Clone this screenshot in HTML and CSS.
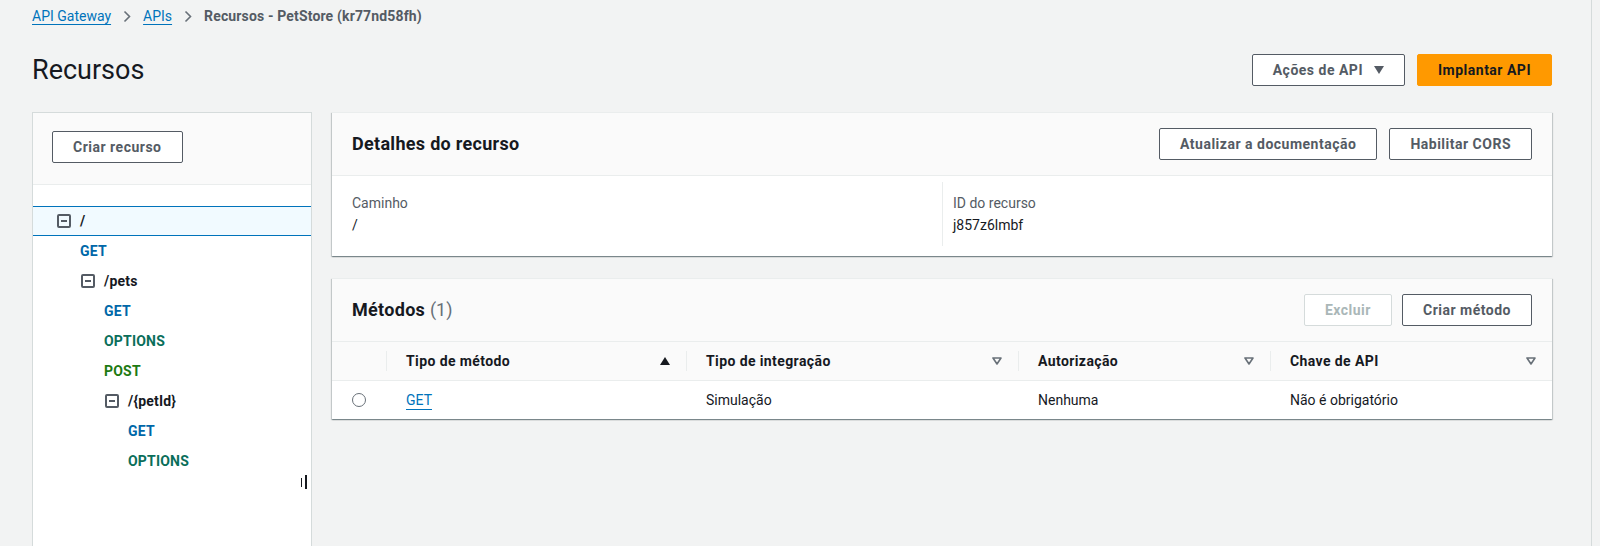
FILE: index.html
```html
<!DOCTYPE html>
<html lang="pt-BR">
<head>
<meta charset="utf-8">
<title>Recursos - PetStore</title>
<link rel="stylesheet" href="styles.css">
</head>
<body>
<div class="page">
  <nav class="crumbs">
    <a class="crumb-link" href="#">API Gateway</a>
    <svg class="chev" width="8" height="13" viewBox="0 0 8 13"><path d="M1.5 1.5 L6.5 6.5 L1.5 11.5" fill="none" stroke="#687078" stroke-width="1.6"/></svg>
    <a class="crumb-link" href="#">APIs</a>
    <svg class="chev" width="8" height="13" viewBox="0 0 8 13"><path d="M1.5 1.5 L6.5 6.5 L1.5 11.5" fill="none" stroke="#687078" stroke-width="1.6"/></svg>
    <span class="crumb-current">Recursos - PetStore (kr77nd58fh)</span>
  </nav>

  <header class="pagehead">
    <h1>Recursos</h1>
    <div class="actions">
      <button class="btn">Ações de API
        <svg width="10" height="8" viewBox="0 0 10 8"><polygon points="0,0 10,0 5,8" fill="#545b64"/></svg>
      </button>
      <button class="btn btn-primary">Implantar API</button>
    </div>
  </header>

  <div class="main">
    <aside class="tree-panel">
      <div class="tree-head">
        <button class="btn">Criar recurso</button>
      </div>
      <ul class="tree">
        <li class="row res d0 sel">
          <svg class="minus" width="14" height="14" viewBox="0 0 14 14"><rect x="1" y="1" width="12" height="12" rx="1" fill="none" stroke="#545b64" stroke-width="2"/><line x1="4" y1="7" x2="10" y2="7" stroke="#545b64" stroke-width="2"/></svg>
          <span>/</span>
        </li>
        <li class="row m0 get">GET</li>
        <li class="row res d1">
          <svg class="minus" width="14" height="14" viewBox="0 0 14 14"><rect x="1" y="1" width="12" height="12" rx="1" fill="none" stroke="#545b64" stroke-width="2"/><line x1="4" y1="7" x2="10" y2="7" stroke="#545b64" stroke-width="2"/></svg>
          <span>/pets</span>
        </li>
        <li class="row m1 get">GET</li>
        <li class="row m1 options">OPTIONS</li>
        <li class="row m1 post">POST</li>
        <li class="row res d2">
          <svg class="minus" width="14" height="14" viewBox="0 0 14 14"><rect x="1" y="1" width="12" height="12" rx="1" fill="none" stroke="#545b64" stroke-width="2"/><line x1="4" y1="7" x2="10" y2="7" stroke="#545b64" stroke-width="2"/></svg>
          <span>/{petId}</span>
        </li>
        <li class="row m2 get">GET</li>
        <li class="row m2 options">OPTIONS</li>
      </ul>
      <div class="grip"><span class="g1"></span><span class="g2"></span></div>
    </aside>

    <div class="content">
      <section class="panel">
        <div class="panel-head">
          <h2>Detalhes do recurso</h2>
          <div class="actions">
            <button class="btn">Atualizar a documentação</button>
            <button class="btn">Habilitar CORS</button>
          </div>
        </div>
        <div class="panel-body">
          <div class="cols">
            <div class="col">
              <div class="label">Caminho</div>
              <div class="value">/</div>
            </div>
            <div class="col col-right">
              <div class="label">ID do recurso</div>
              <div class="value">j857z6lmbf</div>
            </div>
          </div>
        </div>
      </section>

      <section class="panel">
        <div class="panel-head">
          <h2>Métodos <span class="count">(1)</span></h2>
          <div class="actions actions-tight">
            <button class="btn btn-disabled">Excluir</button>
            <button class="btn">Criar método</button>
          </div>
        </div>
        <table class="methods">
          <colgroup>
            <col class="c0"><col class="c1"><col class="c2"><col class="c3"><col>
          </colgroup>
          <thead>
            <tr>
              <th></th>
              <th><div class="th-in"><span>Tipo de método</span><svg width="10" height="8" viewBox="0 0 10 8"><polygon points="0,8 10,8 5,0" fill="#16191f"/></svg></div></th>
              <th><div class="th-in"><span>Tipo de integração</span><svg width="10" height="8" viewBox="0 0 10 8"><polygon points="1,1 9,1 5,7" fill="none" stroke="#687078" stroke-width="1.6" stroke-linejoin="round"/></svg></div></th>
              <th><div class="th-in"><span>Autorização</span><svg width="10" height="8" viewBox="0 0 10 8"><polygon points="1,1 9,1 5,7" fill="none" stroke="#687078" stroke-width="1.6" stroke-linejoin="round"/></svg></div></th>
              <th><div class="th-in"><span>Chave de API</span><svg width="10" height="8" viewBox="0 0 10 8"><polygon points="1,1 9,1 5,7" fill="none" stroke="#687078" stroke-width="1.6" stroke-linejoin="round"/></svg></div></th>
            </tr>
          </thead>
          <tbody>
            <tr>
              <td class="radio-cell"><span class="radio"></span></td>
              <td><a class="link" href="#">GET</a></td>
              <td>Simulação</td>
              <td>Nenhuma</td>
              <td>Não é obrigatório</td>
            </tr>
          </tbody>
        </table>
      </section>
    </div>
  </div>
</div>
</body>
</html>
```

FILE: styles.css
```css
* { box-sizing: border-box; }

html, body {
  margin: 0;
  height: 100%;
}

body {
  background: #f2f3f3;
  font-family: Roboto, "Noto Sans", "Liberation Sans", sans-serif;
  font-size: 14px;
  color: #16191f;
  overflow: hidden;
}

.page {
  width: 1592px;
  height: 546px;
  border-right: 1px solid #d5dbdb;
  padding: 6px 39px 0 32px;
}

/* breadcrumbs */
.crumbs {
  display: flex;
  align-items: center;
  gap: 12px;
  height: 20px;
  line-height: 20px;
}

.crumb-link {
  color: #0073bb;
  text-decoration: underline;
  text-underline-offset: 3px;
  text-decoration-thickness: 1px;
}

.chev { display: block; }

.crumb-current {
  color: #545b64;
  font-weight: 700;
  letter-spacing: 0.15px;
}

/* page header */
.pagehead {
  display: flex;
  justify-content: space-between;
  align-items: center;
  height: 40px;
  margin-top: 24px;
}

h1 {
  margin: 0;
  font-size: 27px;
  font-weight: 400;
  line-height: 36px;
}

.actions {
  display: flex;
  align-items: center;
  gap: 12px;
}

.actions-tight { gap: 10px; }

.btn {
  height: 32px;
  padding: 0 20px;
  border: 1px solid #545b64;
  border-radius: 2px;
  background: #fff;
  color: #545b64;
  font-family: Roboto, "Noto Sans", "Liberation Sans", sans-serif;
  font-size: 14px;
  font-weight: 700;
  letter-spacing: 0.5px;
  display: inline-flex;
  align-items: center;
  gap: 11px;
  cursor: pointer;
}

.btn-primary {
  background: #ff9900;
  border-color: #ff9900;
  color: #16191f;
}

.btn-disabled {
  border-color: #d5dbdb;
  color: #aab7b8;
}

/* layout */
.main {
  display: flex;
  align-items: flex-start;
  gap: 20px;
  margin-top: 22px;
}

/* tree panel */
.tree-panel {
  position: relative;
  flex: none;
  width: 280px;
  height: 460px;
  background: #fff;
  border: 1px solid #d5dbdb;
}

.tree-head {
  background: #fafafa;
  border-bottom: 1px solid #eaeded;
  padding: 18px 19px 21px;
}

.tree {
  list-style: none;
  margin: 0;
  padding: 21px 0 0;
}

.row {
  display: flex;
  align-items: center;
  gap: 9px;
  height: 30px;
  font-weight: 700;
  letter-spacing: 0.2px;
}

.row.sel {
  background: #f1faff;
  border-top: 1px solid #0073bb;
  border-bottom: 1px solid #0073bb;
}

.minus { display: block; flex: none; }

.d0 { padding-left: 24px; }
.d1 { padding-left: 48px; }
.d2 { padding-left: 72px; }
.m0 { padding-left: 47px; }
.m1 { padding-left: 71px; }
.m2 { padding-left: 95px; }

.get { color: #0067a8; }
.options { color: #0a6e5a; }
.post { color: #1d7a12; }

.grip {
  position: absolute;
  right: 4px;
  top: 362px;
  display: flex;
  align-items: center;
  gap: 3px;
}

.grip .g1 {
  width: 1px;
  height: 9px;
  background: #16191f;
}

.grip .g2 {
  width: 2px;
  height: 14px;
  background: #16191f;
}

/* content panels */
.content {
  flex: 1;
  display: flex;
  flex-direction: column;
  gap: 22px;
}

.panel {
  background: #fff;
  border-top: 1px solid #eaeded;
  box-shadow: 0 1px 1px 0 rgba(0, 28, 36, 0.3), 1px 1px 1px 0 rgba(0, 28, 36, 0.15), -1px 1px 1px 0 rgba(0, 28, 36, 0.15);
}

.panel-head {
  display: flex;
  align-items: center;
  justify-content: space-between;
  height: 63px;
  padding: 0 20px;
  background: #fafafa;
  border-bottom: 1px solid #eaeded;
}

h2 {
  margin: 0;
  font-size: 18px;
  font-weight: 700;
  line-height: 24px;
  letter-spacing: 0.3px;
}

.count {
  color: #687078;
  font-weight: 400;
  letter-spacing: 0;
}

.panel-body {
  padding: 6px 20px 10px;
}

.cols {
  display: grid;
  grid-template-columns: 1fr 1fr;
}

.col {
  padding: 10px 0;
}

.col-right {
  border-left: 1px solid #eaeded;
  padding-left: 10px;
}

.label {
  color: #545b64;
  line-height: 22px;
}

.value {
  line-height: 22px;
}

/* table */
.methods {
  width: 100%;
  border-collapse: collapse;
  table-layout: fixed;
}

.c0 { width: 54px; }
.c1 { width: 300px; }
.c2 { width: 332px; }
.c3 { width: 252px; }

.methods th {
  height: 38px;
  padding: 0;
  background: #fafafa;
  border-bottom: 1px solid #eaeded;
  text-align: left;
  font-weight: 700;
  letter-spacing: 0.4px;
}

.th-in {
  display: flex;
  align-items: center;
  justify-content: space-between;
  height: 20px;
  border-left: 1px solid #eaeded;
  padding: 0 16px 0 19px;
}

.th-in svg { display: block; }

.methods td {
  height: 39px;
  padding: 0 0 0 20px;
}

.radio {
  display: block;
  width: 14px;
  height: 14px;
  border: 1px solid #687078;
  border-radius: 50%;
  background: #fff;
}

.link {
  color: #0073bb;
  text-decoration: underline;
  text-underline-offset: 4px;
}
```
